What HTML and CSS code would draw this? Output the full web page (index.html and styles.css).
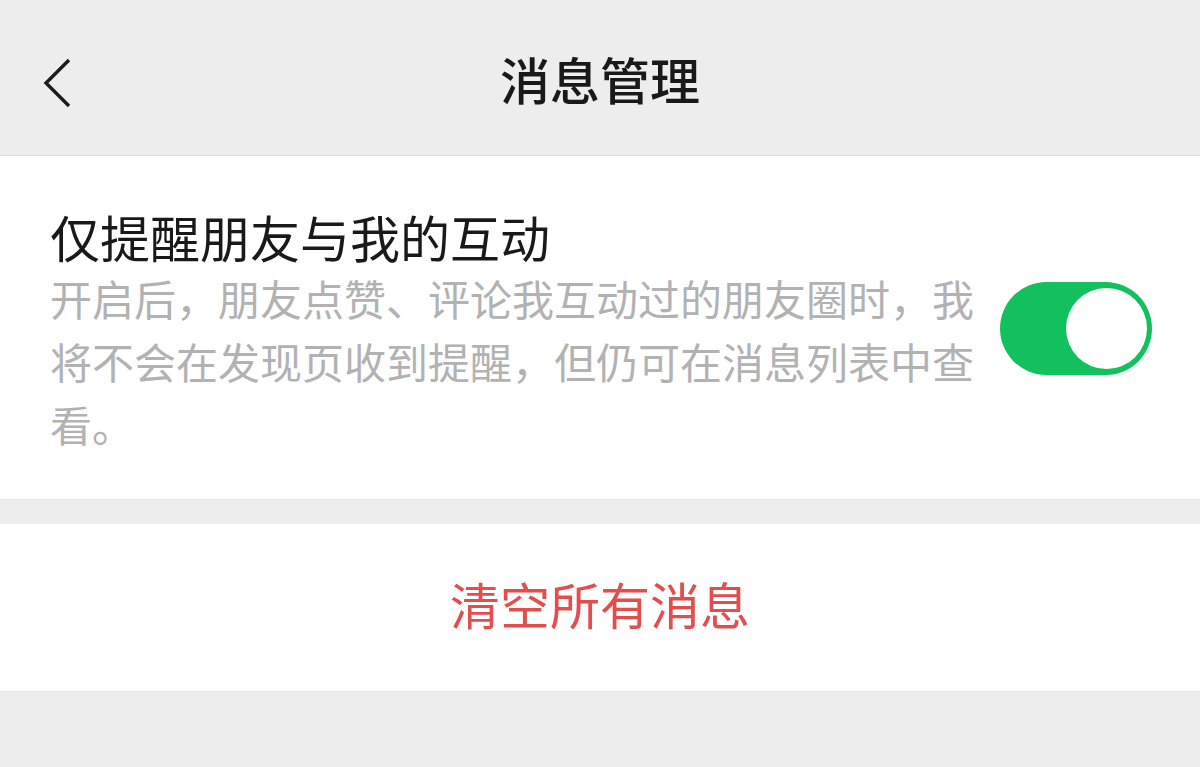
FILE: index.html
```html
<!DOCTYPE html>
<html lang="zh-CN">
<head>
    <meta charset="UTF-8">
    <meta name="viewport" content="width=device-width, initial-scale=1.0">
    <title>消息管理</title>
    <link rel="stylesheet" href="styles.css">
</head>
<body>

    <header class="nav-bar">
        <span class="back-btn">
            <svg width="32" height="52" viewBox="0 0 32 52">
                <polyline points="27,3 4,26 27,49" fill="none" stroke="#1c1c1c" stroke-width="3.4" />
            </svg>
        </span>
        <h1 class="nav-title">消息管理</h1>
    </header>

    <section class="cell-group">
        <div class="switch-cell">
            <div class="cell-text">
                <div class="cell-title">仅提醒朋友与我的互动</div>
                <div class="cell-desc">开启后，朋友点赞、评论我互动过的朋友圈时，我将不会在发现页收到提醒，但仍可在消息列表中查看。</div>
            </div>
            <div class="switch on">
                <span class="switch-knob"></span>
            </div>
        </div>
    </section>

    <section class="cell-group spaced">
        <div class="danger-btn">清空所有消息</div>
    </section>

</body>
</html>
```

FILE: styles.css
```css
body {
    margin: 0;
    background-color: #ededed;
    font-family: "Noto Sans CJK SC", "Noto Sans", sans-serif;
}
.nav-bar {
    height: 155px;
    border-bottom: 1px solid #dcdcdc;
    display: flex;
    align-items: center;
    justify-content: center;
    position: relative;
}
.back-btn {
    position: absolute;
    left: 42px;
    top: 57px;
    display: flex;
}
.nav-title {
    margin: 0;
    font-size: 50px;
    font-weight: 500;
    color: #191919;
    line-height: 60px;
}

.cell-group {
    background-color: #fff;
    border-bottom: 1px solid #e2e2e2;
}
.cell-group.spaced {
    margin-top: 24px;
}
.switch-cell {
    display: flex;
    align-items: center;
    padding: 50px 48px 44px 50px;
    gap: 24px;
}
.cell-text {
    width: 926px;
}
.cell-title {
    font-size: 50px;
    line-height: 60px;
    color: #191919;
}
.cell-desc {
    font-size: 42px;
    line-height: 63px;
    color: #b2b2b2;
}

.switch {
    width: 152px;
    height: 93px;
    margin-bottom: 4px;
    border-radius: 47px;
    background-color: #12c15e;
    display: flex;
    align-items: center;
    justify-content: flex-end;
    padding-right: 5px;
    box-sizing: border-box;
}
.switch-knob {
    width: 81px;
    height: 81px;
    border-radius: 50%;
    background-color: #fff;
}

.danger-btn {
    height: 159px;
    line-height: 159px;
    padding-bottom: 8px;
    text-align: center;
    font-size: 50px;
    color: #e34d4d;
}
```
